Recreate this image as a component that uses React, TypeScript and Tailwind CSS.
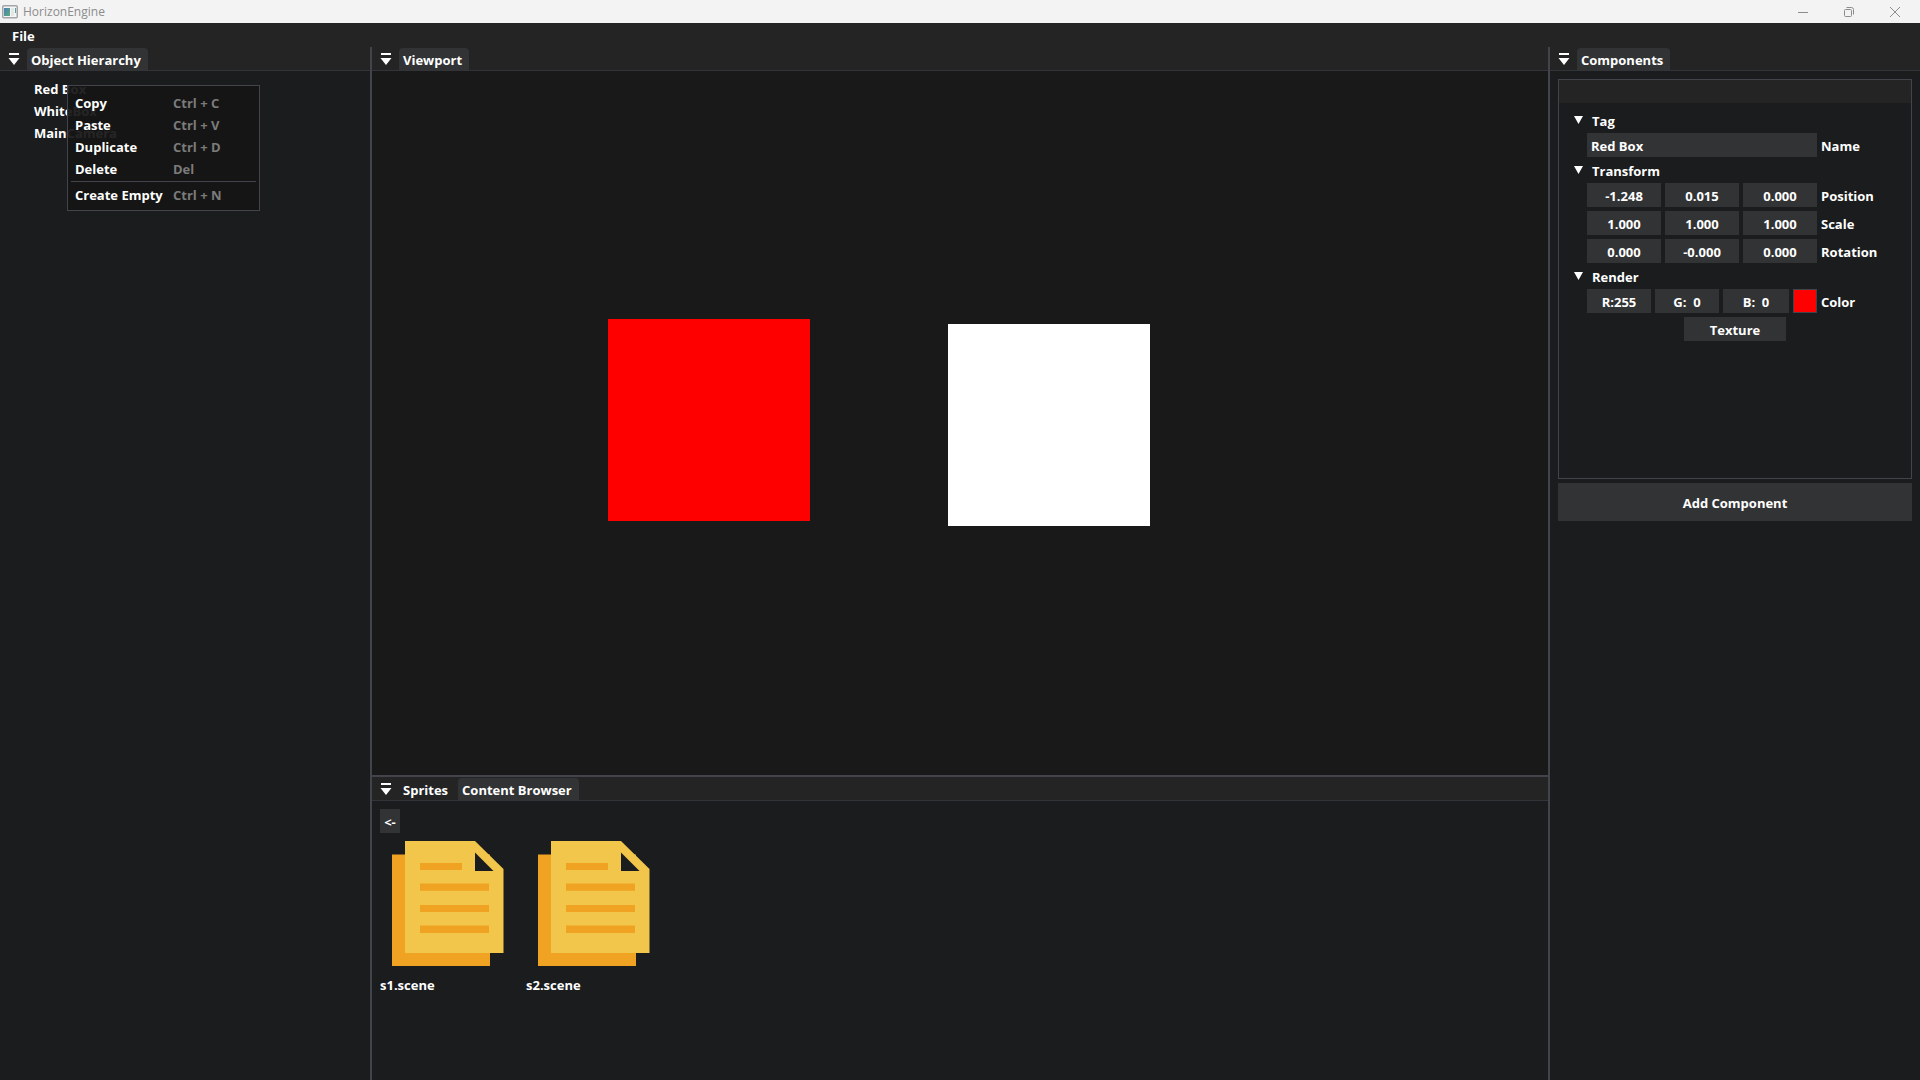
import React from "react";

const TabMenuIcon = () => (
  <svg width="12" height="14" viewBox="0 0 12 14" fill="#fff" aria-hidden="true">
    <rect x="1" y="1" width="10" height="2" />
    <path d="M0.5 6h11L6 13z" />
  </svg>
);

function TabBar({ tabs, active }: { tabs: string[]; active: string }) {
  return (
    <div className="flex h-6 shrink-0 items-end border-b border-[#333439] bg-[#242424] pl-2">
      <button className="mr-1 flex h-full w-[15px] items-center" aria-label="Window menu">
        <TabMenuIcon />
      </button>
      <div role="tablist" className="flex h-[22px] gap-[3px]">
        {tabs.map((t) => (
          <button
            key={t}
            role="tab"
            aria-selected={t === active}
            className={
              t === active
                ? "h-full rounded-t bg-[#323335] pt-[2px] pr-[7px] pl-1"
                : "h-full rounded-t pt-[2px] pr-[7px] pl-1"
            }
          >
            {t}
          </button>
        ))}
      </div>
    </div>
  );
}

const commands = [
  ["Copy", "Ctrl + C"],
  ["Paste", "Ctrl + V"],
  ["Duplicate", "Ctrl + D"],
  ["Delete", "Del"],
];

function MenuItem({ label, keys }: { label: string; keys: string }) {
  return (
    <button role="menuitem" className="grid h-[22px] w-full grid-cols-[98px_1fr] items-center px-[7px] text-left whitespace-nowrap">
      <span>{label}</span>
      <span className="text-[#7b7b7b]">{keys}</span>
    </button>
  );
}

function Hierarchy() {
  return (
    <aside className="flex w-[370px] shrink-0 flex-col bg-[#1b1c1e]">
      <TabBar tabs={["Object Hierarchy"]} active="Object Hierarchy" />
      <div className="relative">
        <ul className="flex flex-col gap-1 pt-[9px] pl-[34px]">
          {["Red Box", "WhiteBox", "MainCamera"].map((o) => (
            <li key={o} className="h-[18px]">
              {o}
            </li>
          ))}
        </ul>
        <div role="menu" className="absolute top-[14px] left-[67px] w-[193px] border border-[#43434b] bg-[#141414]/93 pt-[6px] pb-1">
          {commands.map(([label, keys]) => (
            <MenuItem key={label} label={label} keys={keys} />
          ))}
          <hr className="mx-[3px] mt-[1px] mb-[2px] border-[#43434b]" />
          <MenuItem label="Create Empty" keys="Ctrl + N" />
        </div>
      </div>
    </aside>
  );
}

function Section({ title, children }: { title: string; children: React.ReactNode }) {
  return (
    <section>
      <button className="mt-[5px] mb-[3px] flex h-[18px] items-center" aria-expanded="true">
        <svg className="mr-[9px] mb-[3px]" width="9" height="8" viewBox="0 0 9 8" fill="#fff" aria-hidden="true">
          <path d="M0 0h9L4.500 8z" />
        </svg>
        {title}
      </button>
      <div className="flex flex-col gap-1 pl-[13px]">{children}</div>
    </section>
  );
}

const field = "h-6 w-full min-w-0 rounded-none bg-[#323335] pt-[2px] text-white outline-none";

function VectorRow({ name, values }: { name: string; values: string[] }) {
  return (
    <div role="group" aria-label={name} className="flex items-center gap-1">
      <div className="grid w-[230px] shrink-0 grid-cols-3 gap-1">
        {values.map((v, i) => (
          <input key={i} aria-label={`${name} ${"XYZ"[i]}`} defaultValue={v} className={`${field} text-center`} />
        ))}
      </div>
      <span className="pt-[2px]">{name}</span>
    </div>
  );
}

function Components() {
  return (
    <aside className="flex w-[370px] shrink-0 flex-col bg-[#1b1c1e]">
      <TabBar tabs={["Components"]} active="Components" />
      <div className="flex flex-col gap-1 p-2">
        <div className="h-[400px] border border-[#43434b]">
          <div className="h-[23px] bg-[#242424]" />
          <div className="pt-1 pl-[15px]">
            <Section title="Tag">
              <label className="flex items-center gap-1">
                <span className="w-[230px] shrink-0">
                  <input defaultValue="Red Box" className={`${field} block px-1`} />
                </span>
                <span className="pt-[2px]">Name</span>
              </label>
            </Section>
            <Section title="Transform">
              <VectorRow name="Position" values={["-1.248", "0.015", "0.000"]} />
              <VectorRow name="Scale" values={["1.000", "1.000", "1.000"]} />
              <VectorRow name="Rotation" values={["0.000", "-0.000", "0.000"]} />
            </Section>
            <Section title="Render">
              <div role="group" aria-label="Color" className="flex items-center gap-1">
                <div className="grid w-[230px] shrink-0 grid-cols-[64px_64px_66px_24px] gap-1">
                  {["R:255", "G:\u00a0 0", "B:\u00a0 0"].map((v, i) => (
                    <input key={v} aria-label={["Red", "Green", "Blue"][i]} defaultValue={v} className={`${field} text-center`} />
                  ))}
                  <button aria-label="Pick color" className="h-6 border border-[#43434b] bg-[#ff0000]" />
                </div>
                <span className="pt-[2px]">Color</span>
              </div>
            </Section>
          </div>
          <button className="mx-auto mt-1 block h-6 w-[102px] bg-[#323335] pt-[2px]">Texture</button>
        </div>
        <button className="h-[38px] w-full bg-[#323335] pt-[2px]">Add Component</button>
      </div>
    </aside>
  );
}

const SceneIcon = () => (
  <svg width="138" height="138" viewBox="380 835 138 138" aria-hidden="true">
    <path d="M392 854.500h98V966h-98z" fill="#f0a222" />
    <path d="M405 841h70l28.500 28v84H405z" fill="#f1c64b" />
    <path d="M475 852.500v18.500h18.500z" fill="#1b1c1e" />
    <path d="M420 863h42v7h-42zM420 883.500h69v7.200h-69zM420 905h69v7h-69zM420 925.500h69v7.500h-69z" fill="#f0a222" />
  </svg>
);

function Content() {
  return (
    <section className="flex h-[305px] shrink-0 flex-col border-t-2 border-[#43434b] bg-[#1b1c1e]">
      <TabBar tabs={["Sprites", "Content Browser"]} active="Content Browser" />
      <div className="p-2">
        <button aria-label="Back" className="block h-6 w-5 bg-[#323335] pt-[2px]">&lt;-</button>
        <div className="mt-[2px] flex gap-2">
          {["s1.scene", "s2.scene"].map((s) => (
            <figure key={s} className="w-[138px]">
              <SceneIcon />
              <figcaption className="mt-[3px] h-[18px]">{s}</figcaption>
            </figure>
          ))}
        </div>
      </div>
    </section>
  );
}

function TitleBar() {
  return (
    <header className="flex h-[23px] shrink-0 items-center bg-[#f3f3f3] pr-[19px] pl-[2px] text-[#8c8c8c]">
      <svg width="16" height="14" viewBox="0 0 16 14" aria-hidden="true">
        <defs>
          <linearGradient id="appIcon" x1="0" y1="0" x2="1" y2="1">
            <stop offset="0" stopColor="#4a7fb5" />
            <stop offset="1" stopColor="#5cab7c" />
          </linearGradient>
        </defs>
        <rect x="0.75" y="0.75" width="14.500" height="12" rx="1" fill="#f4f6f6" stroke="#a2a6a8" strokeWidth="1.500" />
        <rect x="2" y="3" width="6" height="8" fill="url(#appIcon)" />
        <rect x="9" y="3" width="3" height="8" fill="#e4e6e6" />
        <rect x="13" y="3" width="1" height="5" fill="#5f9c9c" />
      </svg>
      <h1 className="ml-[5px] pt-px text-[12px] font-normal">HorizonEngine</h1>
      <div className="ml-auto flex gap-[34px]">
        <button aria-label="Minimize">
          <svg width="12" height="12" viewBox="0 0 12 12" stroke="#8c8c8c"><path d="M1 6.500h10" /></svg>
        </button>
        <button aria-label="Restore">
          <svg width="12" height="12" viewBox="0 0 12 12" fill="none" stroke="#8c8c8c">
            <rect x="1.500" y="3.500" width="7" height="7" rx="1" />
            <path d="M3.500 1.500h5a2 2 0 0 1 2 2v5" />
          </svg>
        </button>
        <button aria-label="Close">
          <svg width="12" height="12" viewBox="0 0 12 12" stroke="#8c8c8c"><path d="M1 1l10 10M11 1L1 11" /></svg>
        </button>
      </div>
    </header>
  );
}

export default function App() {
  return (
    <div className="flex min-h-screen flex-col bg-[#1b1c1e] font-['Open_Sans',sans-serif] text-[13px] leading-[18px] font-bold text-white">
      <TitleBar />
      <nav className="flex h-6 shrink-0 items-center bg-[#242424] pt-[2px] pl-3">
        <button>File</button>
      </nav>
      <div className="flex grow items-stretch">
        <Hierarchy />
        <main className="flex min-w-0 grow flex-col border-x-2 border-[#43434b]">
          <section className="flex grow flex-col bg-[#191919]">
            <TabBar tabs={["Viewport"]} active="Viewport" />
            <div className="flex items-start gap-[138px] pt-[248px] pl-[236px]">
              <div className="size-[202px] bg-[#ff0000]" />
              <div className="mt-[5px] size-[202px] bg-white" />
            </div>
          </section>
          <Content />
        </main>
        <Components />
      </div>
    </div>
  );
}
